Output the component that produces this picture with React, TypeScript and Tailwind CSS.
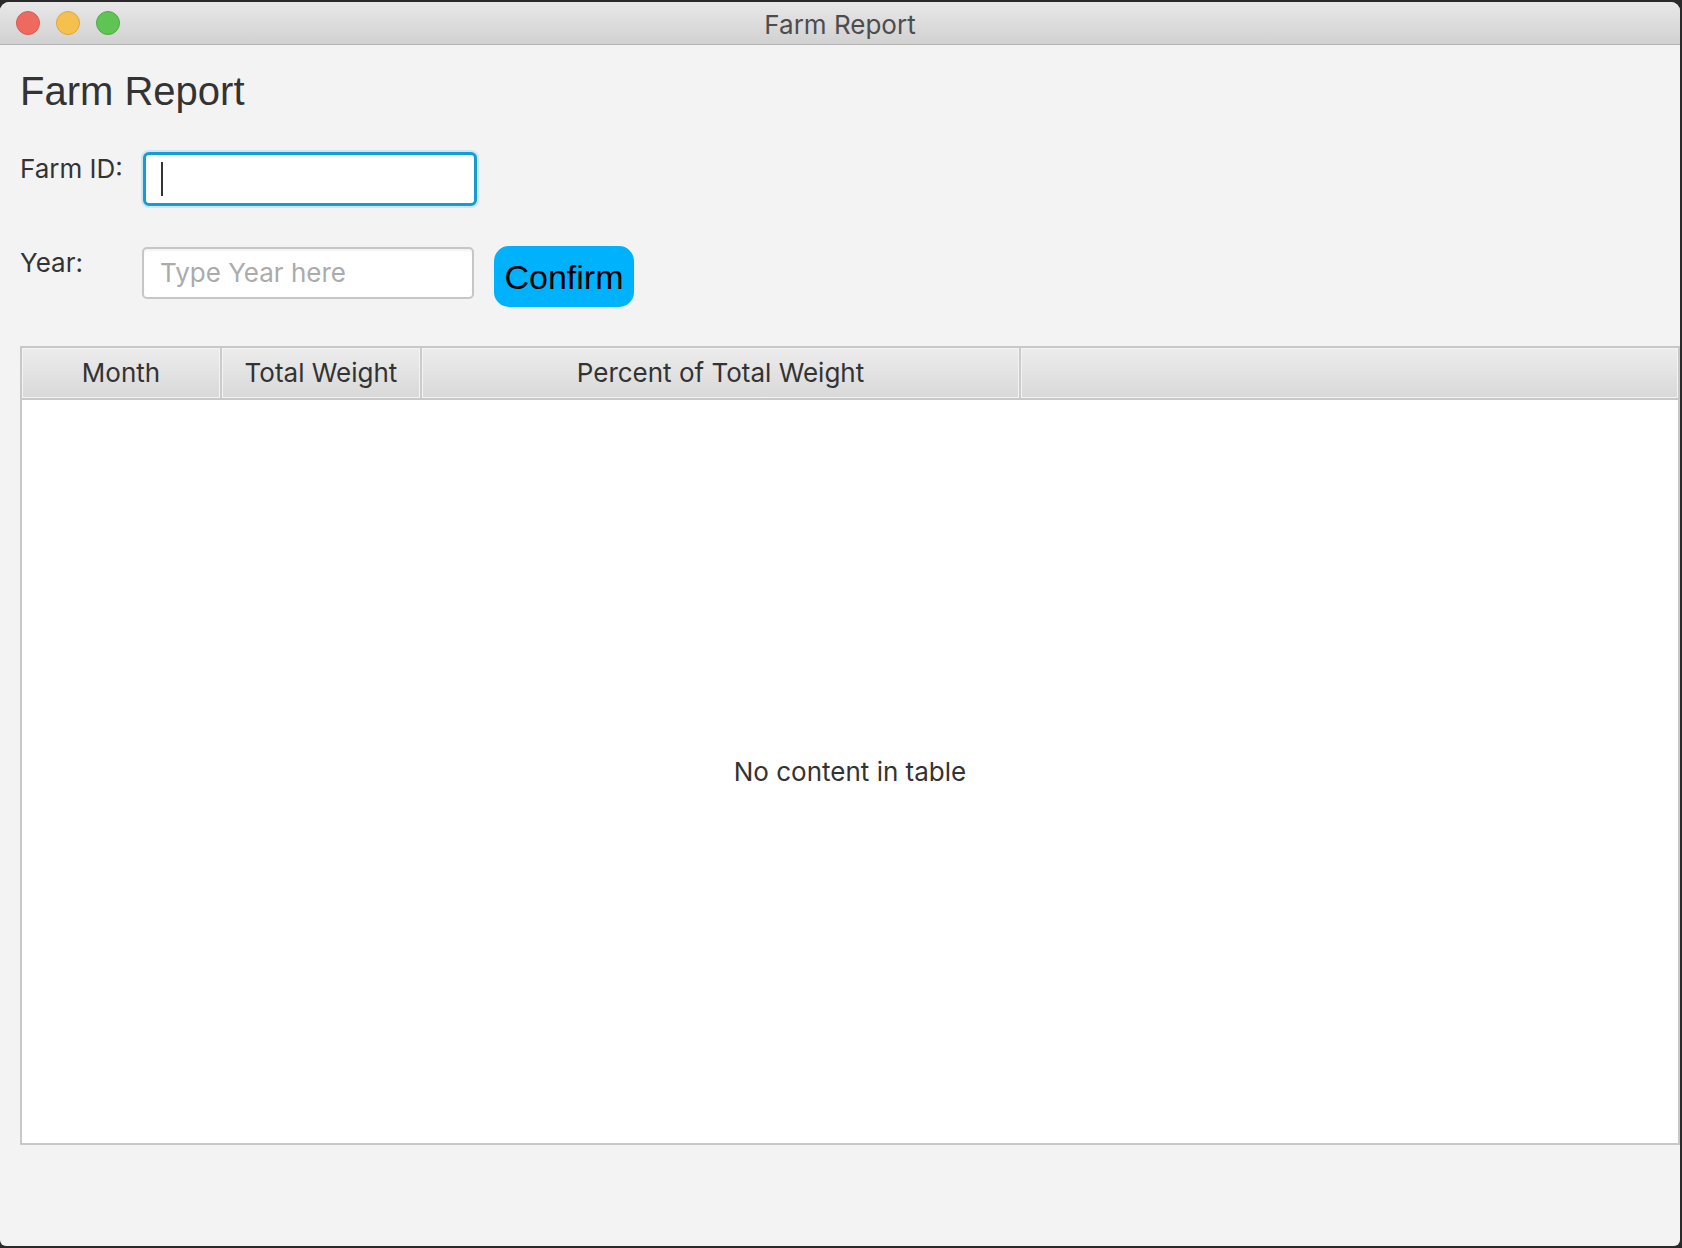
import React from 'react';

const sf = "font-['Inter','Noto_Sans',sans-serif]";
const helv = "font-['Liberation_Sans','Arial',sans-serif]";

const columns = [
  { name: 'Month', width: 'w-[200px]' },
  { name: 'Total Weight', width: 'w-[200px]' },
  { name: 'Percent of Total Weight', width: 'w-[599px]' },
];

const TrafficLights: React.FC = () => (
  <div className="flex items-center gap-[16px] pl-[16px]">
    <span className="w-[24px] h-[24px] rounded-full bg-[#ee6a5f] border border-[#d65a4f]" />
    <span className="w-[24px] h-[24px] rounded-full bg-[#f6c04f] border border-[#dfa53a]" />
    <span className="w-[24px] h-[24px] rounded-full bg-[#5fc454] border border-[#4ea944]" />
  </div>
);

export default function App() {
  return (
    <div className="w-[1682px] h-[1248px] bg-[#2a2a2a] pt-[2px] overflow-hidden">
      <div className="w-[1680px] h-[1244px] bg-[#f3f3f3] rounded-t-[9px] rounded-b-[6px] overflow-hidden flex flex-col">
        {/* title bar */}
        <div className="h-[43px] shrink-0 grid grid-cols-[1fr_auto_1fr] items-center bg-linear-to-b from-[#e8e8e8] to-[#d1d1d1] border-b border-[#b4b4b4]">
          <TrafficLights />
          <div className={`${sf} text-[26px] leading-[26px] text-[#4d4d4d] pt-[3px]`}>Farm Report</div>
          <div />
        </div>

        <div className="flex-1 flex flex-col pl-[20px]">
          <h1 className={`${helv} mt-[26px] text-[40px] leading-[40px] text-[#333333]`}>Farm Report</h1>

          <div className="mt-[41px] flex items-start">
            <div className={`${sf} w-[123px] pt-[4px] text-[26px] leading-[26px] text-[#333333]`}>Farm ID:</div>
            <div className="w-[334px] h-[54px] rounded-[6px] border-[3px] border-[#159cd6] bg-white shadow-[0_0_0_2px_#cde8f4] flex items-center pl-[15px]">
              <span className="w-[2px] h-[34px] bg-[#333333]" />
            </div>
          </div>

          <div className="mt-[40px] flex items-start">
            <div className={`${sf} w-[122px] pt-[4px] text-[26px] leading-[26px] text-[#333333]`}>Year:</div>
            <div className="mt-[1px] w-[332px] h-[52px] rounded-[5px] border-2 border-[#c6c6c6] bg-white shadow-[inset_0_2px_2px_rgba(0,0,0,0.05)] flex items-center pl-[16px]">
              <span className={`${sf} text-[26px] leading-[26px] text-[#ababab]`}>Type Year here</span>
            </div>
            <button className={`${helv} ml-[20px] w-[140px] h-[61px] rounded-[15px] bg-[#00b2fb] text-black text-[34px] leading-[34px] flex items-center justify-center`}>
              Confirm
            </button>
          </div>

          <div className="mt-[39px] h-[799px] border-2 border-[#c8c8c8] bg-white flex flex-col">
            <div className="h-[52px] shrink-0 flex border-b-2 border-[#c8c8c8]">
              {columns.map((c) => (
                <div key={c.name} className={`${c.width} shrink-0 border-r-2 border-[#cbcbcb]`}>
                  <div className={`${sf} h-full border border-[#f3f3f3] bg-linear-to-b from-[#ececec] to-[#d9d9d9] flex items-center justify-center text-[26px] leading-[26px] text-[#333333]`}>
                    {c.name}
                  </div>
                </div>
              ))}
              <div className="flex-1">
                <div className="h-full border border-[#f3f3f3] bg-linear-to-b from-[#ececec] to-[#d9d9d9]" />
              </div>
            </div>
            <div className={`${sf} flex-1 flex items-center justify-center text-[26px] leading-[26px] text-[#333333]`}>
              No content in table
            </div>
          </div>
        </div>
      </div>
    </div>
  );
}
